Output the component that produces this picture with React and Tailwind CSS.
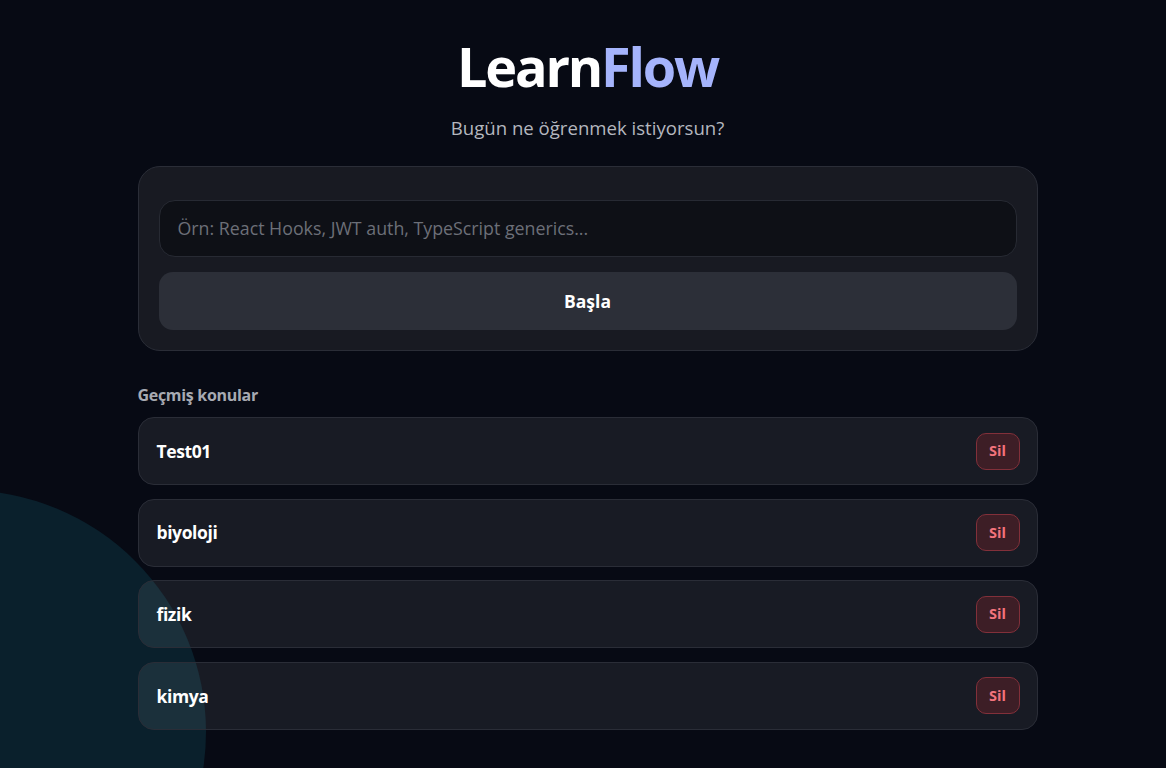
import React from "react";

const topics = ["Test01", "biyoloji", "fizik", "kimya"];

export default function App() {
  return (
    <div
      className="relative min-h-[768px] w-full overflow-hidden bg-[#070a14] text-white"
      style={{ fontFamily: '"Open Sans", "Noto Sans", sans-serif' }}
    >
      <div className="pointer-events-none absolute left-[-278px] top-[490px] h-[484px] w-[484px] rounded-full bg-[#0a202c]" />
      <div className="relative flex justify-center pl-[9px]">
        <div className="flex w-[900px] flex-col">
          <div className="flex flex-col items-center pt-[28px]">
            <h1 className="text-[54px] font-bold leading-[76px] tracking-[-2.2px]">
              Learn<span className="text-[#a5b4fc]">Flow</span>
            </h1>
            <p className="mt-[11px] text-[18.6px] leading-[26px] text-[#b4b7bf]">
              Bugün ne öğrenmek istiyorsun?
            </p>
          </div>

          <div className="mt-[25px] flex flex-col gap-[15px] rounded-[22px] border border-[#2a2d37] bg-[#181a22] px-[20px] pb-[20px] pt-[33px]">
            <div className="flex h-[57px] items-center rounded-[16px] border border-[#272a33] bg-[#0e1016] px-[18px]">
              <span className="text-[17.8px] text-[#6c6f78]">
                Örn: React Hooks, JWT auth, TypeScript generics...
              </span>
            </div>
            <div className="flex h-[58px] items-center justify-center rounded-[14px] bg-[#2c2f38] text-[17.5px] font-bold">
              Başla
            </div>
          </div>

          <div className="mt-[33px] text-[16px] font-bold leading-[22px] tracking-[-0.3px] text-[#a7aab2]">
            Geçmiş konular
          </div>

          <div className="mt-[11px] flex flex-col gap-[13.6px]">
            {topics.map((t) => (
              <div
                key={t}
                className="flex h-[68px] items-center justify-between rounded-[16px] border border-[#2a2d37] bg-white/[0.07] pl-[18px] pr-[17px]"
              >
                <span className="text-[17.5px] font-bold tracking-[-0.4px]">{t}</span>
                <div className="flex h-[37px] w-[44px] items-center justify-center rounded-[10px] border border-[#82303a] bg-[#3d1e26] text-[14.5px] font-bold text-[#f3737c]">
                  Sil
                </div>
              </div>
            ))}
          </div>
        </div>
      </div>
    </div>
  );
}
